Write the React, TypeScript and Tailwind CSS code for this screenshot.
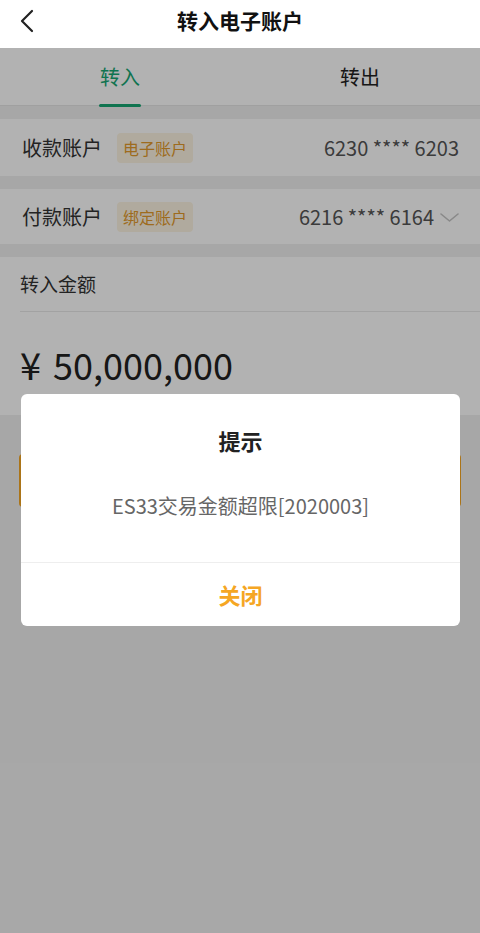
export default function App() {
  return (
    <div
      className="relative min-h-screen bg-[#f0f0f0] text-[#333]"
      style={{ fontFamily: '"Noto Sans CJK SC", "Noto Sans", sans-serif' }}
    >
      {/* Top bar */}
      <header className="relative flex h-12 items-center justify-center bg-white">
        <svg
          className="absolute left-[18px] top-[9px]"
          width="20"
          height="24"
          viewBox="0 0 20 24"
          fill="none"
          stroke="#222"
          strokeWidth="2.2"
          strokeLinecap="round"
          strokeLinejoin="round"
        >
          <polyline points="14,2 4,12 14,22" />
        </svg>
        <h1 className="-mt-1.5 text-[21px] font-bold text-[#111]">转入电子账户</h1>
      </header>

      <div>
        {/* Tabs */}
        <div className="flex h-[58px] border-b border-[#e6e6e6] bg-white">
          <div className="relative flex flex-1 items-center justify-center">
            <span className="text-[20px] text-[#17a673]">转入</span>
            <span className="absolute bottom-[-2px] left-1/2 h-[3px] w-[42px] -translate-x-1/2 rounded-full bg-[#17a673]" />
          </div>
          <div className="flex flex-1 items-center justify-center">
            <span className="text-[20px] text-[#222]">转出</span>
          </div>
        </div>

        {/* Receiving account */}
        <div className="mt-[13px] flex h-[57px] items-center bg-white pl-[22px] pr-[21px]">
          <span className="text-[20px] text-[#333]">收款账户</span>
          <span className="ml-[15px] rounded-sm bg-[#fdf4e3] px-[6px] py-[3px] text-[16px] leading-[24px] text-[#e29a2c]">
            电子账户
          </span>
          <span className="ml-auto text-[20px] text-[#555]">6230 **** 6203</span>
        </div>

        {/* Paying account */}
        <div className="mt-[13px] flex h-[55px] items-center bg-white pl-[22px] pr-[21px]">
          <span className="text-[20px] text-[#333]">付款账户</span>
          <span className="ml-[15px] rounded-sm bg-[#fdf4e3] px-[6px] py-[3px] text-[16px] leading-[24px] text-[#e29a2c]">
            绑定账户
          </span>
          <span className="ml-auto text-[20px] text-[#555]">6216 **** 6164</span>
          <svg
            className="ml-[6px] mt-[2px]"
            width="19"
            height="12"
            viewBox="0 0 19 12"
            fill="none"
            stroke="#c4c4c4"
            strokeWidth="1.6"
            strokeLinecap="round"
            strokeLinejoin="round"
          >
            <polyline points="1,2 9.5,9 18,2" />
          </svg>
        </div>

        {/* Amount */}
        <div className="mt-[13px] bg-white pl-[20px]">
          <div className="flex h-[55px] items-center border-b border-[#e8e8e8]">
            <span className="text-[19px] text-[#333]">转入金额</span>
          </div>
          <div className="flex h-[103px] items-center text-[36px] text-[#222]">
            <span className="text-[38px]">¥</span>
            <span className="ml-[12px]">50,000,000</span>
          </div>
        </div>

        {/* Submit button (label hidden behind the dialog) */}
        <div className="mx-[19px] mt-[39px] h-[53px] rounded bg-[#f5a623]" />
      </div>

      {/* Dimmed overlay (header stays clear) */}
      <div className="absolute inset-x-0 bottom-0 top-12 bg-black/30">
        <div className="absolute left-[21px] right-[20px] top-[346px] overflow-hidden rounded-md bg-white">
          <div className="flex h-[168px] flex-col items-center">
            <h2 className="mt-[30px] text-[22px] font-bold text-[#222]">提示</h2>
            <p className="mt-[34px] text-[20px] text-[#666]">ES33交易金额超限[2020003]</p>
          </div>
          <div className="flex h-[64px] items-center justify-center border-t border-[#eeeeee]">
            <span className="text-[22px] font-bold text-[#f5a623]">关闭</span>
          </div>
        </div>
      </div>
    </div>
  );
}
